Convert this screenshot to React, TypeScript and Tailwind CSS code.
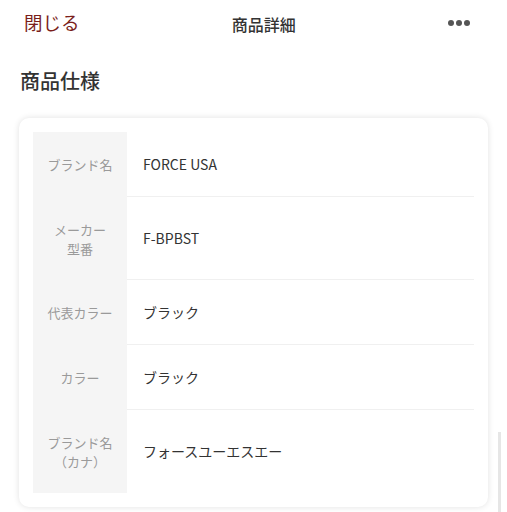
import React from 'react';

const rows: { label: string[]; value: string }[] = [
  { label: ['ブランド名'], value: 'FORCE USA' },
  { label: ['メーカー', '型番'], value: 'F-BPBST' },
  { label: ['代表カラー'], value: 'ブラック' },
  { label: ['カラー'], value: 'ブラック' },
  { label: ['ブランド名', '（カナ）'], value: 'フォースユーエスエー' },
];

export default function App() {
  return (
    <div
      className="relative h-[512px] w-[507px] overflow-hidden bg-white"
      style={{ fontFamily: '"Noto Sans CJK JP", "Noto Sans", sans-serif' }}
    >
      <header className="flex h-[44px] items-center justify-between px-[24px]">
        <span className="text-[18.5px] leading-none text-[#7b1f1c]">閉じる</span>
        <span className="mt-[3px] text-[16px] font-medium leading-none text-[#333]">商品詳細</span>
        <span className="mr-[13px] mt-[2px] flex gap-[2px]">
          <i className="h-[6px] w-[6px] rounded-full bg-[#555]" />
          <i className="h-[6px] w-[6px] rounded-full bg-[#555]" />
          <i className="h-[6px] w-[6px] rounded-full bg-[#555]" />
        </span>
      </header>

      <h2 className="mt-[24px] px-[20px] text-[20px] font-medium leading-[26px] text-[#333]">商品仕様</h2>

      <section className="mx-[19px] mt-[24px] rounded-[10px] bg-white px-[14px] py-[14px] shadow-[0_0_6px_rgba(0,0,0,0.12)]">
        {rows.map((r, i) => (
          <div key={i} className="flex min-h-[65px]">
            <div className="flex w-[94px] shrink-0 flex-col items-center justify-center bg-[#f5f5f5] py-[22.5px] text-center text-[13px] leading-[19px] text-[#9a9a9a]">
              {r.label.map((l) => (
                <span key={l}>{l}</span>
              ))}
            </div>
            <div
              className={
                'flex flex-1 items-center pl-[16px] text-[14px] leading-[21px] text-[#333] ' +
                (i < rows.length - 1 ? 'border-b border-[#f0f0f0]' : '')
              }
            >
              {r.value}
            </div>
          </div>
        ))}
      </section>

      <div className="absolute right-[6px] top-[432px] h-[80px] w-[3px] bg-[#e6e6e6]" />
    </div>
  );
}
